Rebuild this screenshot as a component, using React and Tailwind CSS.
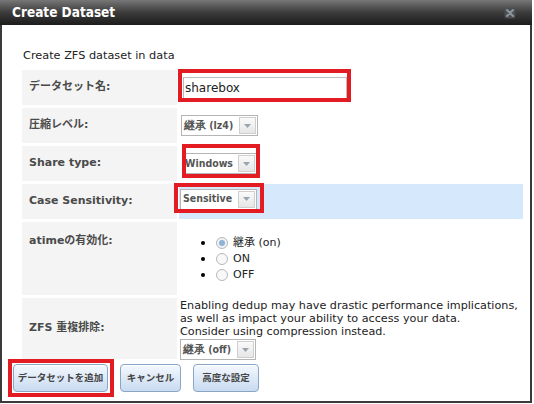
import React from "react";

const F = { fontFamily: '"DejaVu Sans", "Noto Sans CJK JP", sans-serif' };
const T = { fontFamily: '"DejaVu Sans Condensed", "DejaVu Sans", sans-serif' };

function Select({ label, w }) {
  return (
    <div className={`flex h-[21px] border border-[#b5b5b5] bg-white ${w}`}>
      <div className="flex-1 flex items-center pl-[2px] text-[10.5px] font-bold text-[#555] whitespace-nowrap overflow-hidden" style={T}>{label}</div>
      <div className="w-[17px] bg-gradient-to-b from-[#fafafa] to-[#e6e6e6] flex items-center justify-center m-[1px] border border-[#cfcfcf]">
        <svg width="7" height="4" viewBox="0 0 7 4"><path d="M0 0 L7 0 L3.5 4 Z" fill="#9aa4ae" /></svg>
      </div>
    </div>
  );
}

function Row({ label, h, children, blue, top }) {
  return (
    <div className={`flex gap-[2px] ${h}`}>
      <div className={`w-[155px] bg-[#f4f4f4] flex ${top ? "items-start pt-[11px]" : "items-center"} pl-[7px] text-[11px] font-bold text-[#4a4a4a]`}>{label}</div>
      <div className={`flex-1 flex items-center ${blue ? "bg-[#d6e8fb]" : "bg-white"}`}>{children}</div>
    </div>
  );
}

function Btn({ children, w }) {
  return (
    <button className={`h-[28px] ${w} rounded-[4px] border border-[#8aa6c4] bg-gradient-to-b from-[#f4f8fd] to-[#c8dbf1] text-[9.5px] font-bold text-[#444] whitespace-nowrap shadow-[inset_0_1px_0_#fff] px-0`}>{children}</button>
  );
}

function Radio({ checked, label }) {
  return (
    <li className="flex items-center h-[16px]">
      <span className="w-[4px] h-[4px] rounded-full bg-black ml-[22px] mr-[11px]" />
      <span className={`w-[12px] h-[12px] rounded-full border border-[#b8b8b8] flex items-center justify-center ${checked ? "bg-[#eef3f8]" : "bg-[#f8f8f8]"}`}>
        {checked && <span className="w-[6px] h-[6px] rounded-full bg-[#8fb3d2]" />}
      </span>
      <span className="ml-[5px] text-[11px] text-[#222]">{label}</span>
    </li>
  );
}

export default function App() {
  return (
    <div className="relative w-[534px] h-[404px] bg-white overflow-hidden" style={F}>
      <div className="w-[532px] h-[403px] border-x-2 border-b-2 border-[#3a3a3a] flex flex-col">
        <div className="h-[25px] -mx-[2px] bg-gradient-to-b from-[#777777] via-[#3c3c3c] to-[#1c1c1c] flex items-center justify-between pl-[12px] pr-[16px]">
          <span className="text-white font-bold text-[13.5px]" style={T}>Create Dataset</span>
          <svg width="12" height="12" viewBox="0 0 12 12">
            <rect x="0.5" y="0.5" width="11" height="11" rx="2" fill="#4a4e52" />
            <path d="M3 3 L9 9 M9 3 L3 9" stroke="#8d949b" strokeWidth="2" strokeLinecap="round" />
          </svg>
        </div>
        <div className="pl-[20px] pr-[8px] pt-[24px]">
          <div className="text-[11.3px] text-[#222] h-[14px] leading-[14px] ml-[1px]">Create ZFS dataset in data</div>
          <div className="mt-[7px] flex flex-col gap-[3px] w-[501px]">
            <Row label="データセット名:" h="h-[35px]">
              <input readOnly value="sharebox" className="ml-[4px] w-[164px] h-[22px] border border-[#bdbdbd] px-[1px] text-[12px] text-[#222] outline-none" />
            </Row>
            <Row label="圧縮レベル:" h="h-[35px]">
              <div className="ml-[2px]"><Select label="継承 (lz4)" w="w-[77px]" /></div>
            </Row>
            <Row label="Share type:" h="h-[35px]">
              <div className="ml-[3px]"><Select label="Windows" w="w-[75px]" /></div>
            </Row>
            <Row label="Case Sensitivity:" h="h-[35px]" blue>
              <div className="ml-[1px] -mt-[5px]"><Select label="Sensitive" w="w-[77px]" /></div>
            </Row>
            <Row label="atimeの有効化:" h="h-[73px]" top>
              <ul className="flex flex-col pt-[1px]">
                <Radio checked label="継承 (on)" />
                <Radio label="ON" />
                <Radio label="OFF" />
              </ul>
            </Row>
            <Row label="ZFS 重複排除:" h="h-[61px]">
              <div className="flex flex-col self-start pt-[1px] ml-[1px]">
                <div className="text-[11.2px] leading-[13px] text-[#222] whitespace-nowrap">
                  Enabling dedup may have drastic performance implications,<br />
                  as well as impact your ability to access your data.<br />
                  Consider using compression instead.
                </div>
                <div className="mt-[1px]"><Select label="継承 (off)" w="w-[76px]" /></div>
              </div>
            </Row>
          </div>
        </div>
        <div className="flex gap-[12px] pl-[11px] mt-[5px]">
          <Btn w="w-[95px]">データセットを追加</Btn>
          <Btn w="w-[61px]">キャンセル</Btn>
          <Btn w="w-[66px]">高度な設定</Btn>
        </div>
      </div>
      {/* red annotation boxes */}
      <div className="absolute left-[178px] top-[69px] w-[173px] h-[33px] border-[4px] border-[#e31b23]" />
      <div className="absolute left-[182px] top-[144px] w-[78px] h-[34px] border-[4px] border-[#e31b23]" />
      <div className="absolute left-[174px] top-[183px] w-[90px] h-[30px] border-[4px] border-[#e31b23]" />
      <div className="absolute left-[8px] top-[359px] w-[106px] h-[38px] border-[4px] border-[#e31b23]" />
    </div>
  );
}
